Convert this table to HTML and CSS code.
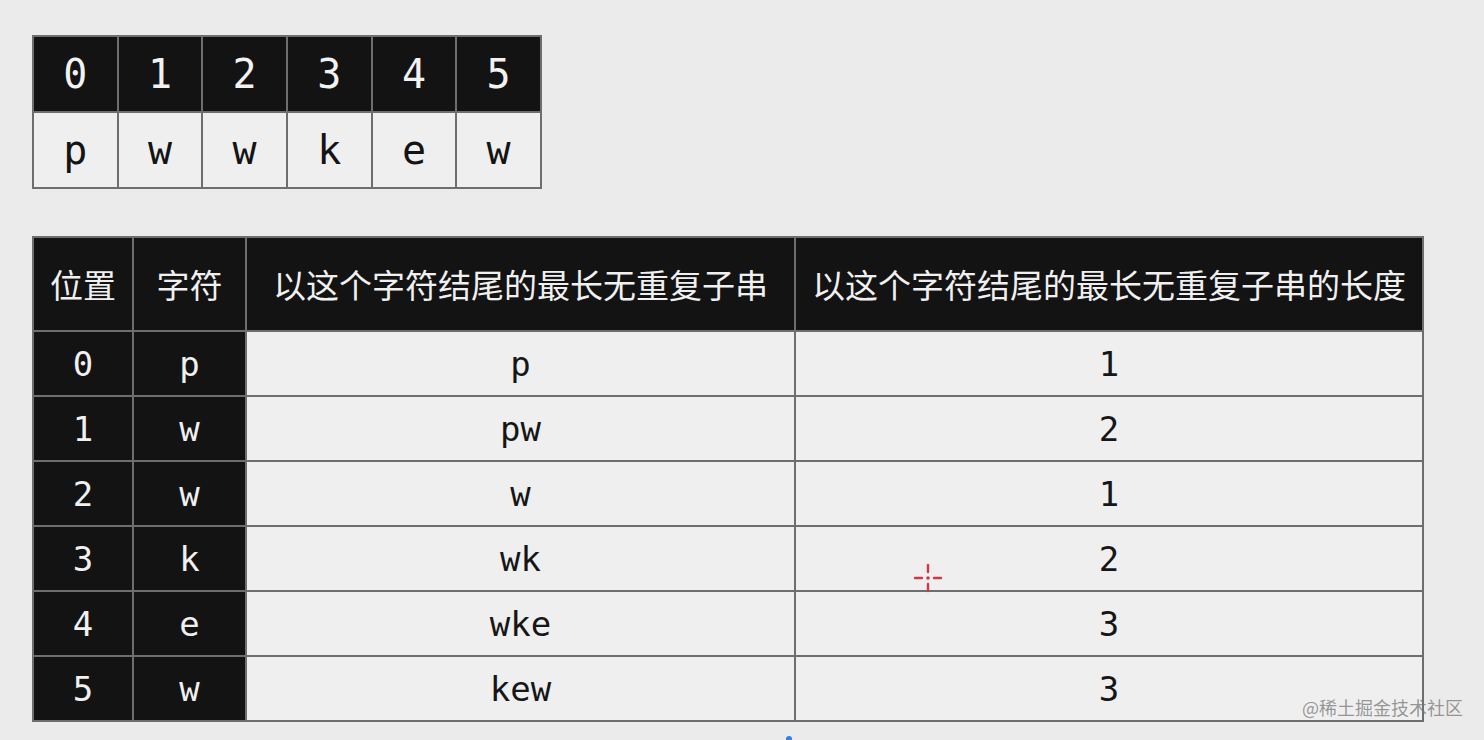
FILE: index.html
```html
<!DOCTYPE html>
<html lang="zh">
<head>
<meta charset="utf-8">
<link rel="stylesheet" href="styles.css">
</head>
<body>
<main class="page">
  <table class="arr">
    <tr class="idx"><td>0</td><td>1</td><td>2</td><td>3</td><td>4</td><td>5</td></tr>
    <tr class="val"><td>p</td><td>w</td><td>w</td><td>k</td><td>e</td><td>w</td></tr>
  </table>

  <table class="dp">
    <colgroup>
      <col class="c1"><col class="c2"><col class="c3"><col class="c4">
    </colgroup>
    <tr class="head">
      <th>位置</th><th>字符</th><th>以这个字符结尾的最长无重复子串</th><th>以这个字符结尾的最长无重复子串的长度</th>
    </tr>
    <tr><td class="d">0</td><td class="d">p</td><td>p</td><td>1</td></tr>
    <tr><td class="d">1</td><td class="d">w</td><td>pw</td><td>2</td></tr>
    <tr><td class="d">2</td><td class="d">w</td><td>w</td><td>1</td></tr>
    <tr><td class="d">3</td><td class="d">k</td><td>wk</td><td>2</td></tr>
    <tr><td class="d">4</td><td class="d">e</td><td>wke</td><td>3</td></tr>
    <tr><td class="d">5</td><td class="d">w</td><td>kew</td><td>3</td></tr>
  </table>

  <div class="cross" aria-hidden="true">
    <svg width="32" height="32" viewBox="0 0 32 32">
      <g stroke="#d0384a" stroke-width="2.4" stroke-linecap="round">
        <line x1="16" y1="3" x2="16" y2="10"/>
        <line x1="16" y1="22" x2="16" y2="29"/>
        <line x1="3" y1="16" x2="10" y2="16"/>
        <line x1="22" y1="16" x2="29" y2="16"/>
      </g>
      <circle cx="16" cy="16" r="1.8" fill="#d0384a"/>
    </svg>
  </div>
  <div class="mark">@稀土掘金技术社区</div>
  <div class="dot"></div>
</main>
</body>
</html>
```

FILE: styles.css
```css
html, body {
  margin: 0;
  padding: 0;
  background: #ebebeb;
  width: 1484px;
  height: 740px;
  overflow: hidden;
}
.page {
  position: relative;
  width: 1484px;
  height: 740px;
  padding: 35px 0 0 32px;
  box-sizing: border-box;
  font-family: "DejaVu Sans Mono", "Liberation Mono", "Noto Sans CJK SC", monospace;
}
table {
  border-collapse: collapse;
  table-layout: fixed;
}
td, th {
  border: 2px solid #6e6e6e;
  padding: 0;
  text-align: center;
  vertical-align: middle;
}
.arr {
  width: 510px;
}
.arr td {
  height: 74px;
  font-size: 40px;
}
.arr .idx td {
  background: #131313;
  color: #f2f2f2;
}
.arr .val td {
  background: #efefef;
  color: #141414;
}
.dp {
  margin-top: 47px;
  width: 1390px;
}
.c1 { width: 100px; }
.c2 { width: 113px; }
.c3 { width: 549px; }
.c4 { width: 628px; }
.dp th {
  background: #131313;
  color: #f0f0f0;
  height: 92px;
  font-family: "Noto Sans CJK SC", sans-serif;
  font-weight: 400;
  font-size: 33px;
  white-space: nowrap;
  letter-spacing: 0;
}
.dp td {
  height: 63px;
  font-size: 34px;
  background: #efefef;
  color: #161616;
}
.dp td.d {
  background: #131313;
  color: #f0f0f0;
}
.cross {
  position: absolute;
  left: 912px;
  top: 562px;
  width: 32px;
  height: 32px;
}
.mark {
  position: absolute;
  left: 1302px;
  top: 694px;
  font-family: "Noto Sans CJK SC", sans-serif;
  font-size: 18px;
  color: rgba(120, 120, 120, 0.75);
  white-space: nowrap;
}
.dot {
  position: absolute;
  left: 786px;
  top: 736px;
  width: 6px;
  height: 6px;
  border-radius: 50%;
  background: #3b7be0;
}
```
